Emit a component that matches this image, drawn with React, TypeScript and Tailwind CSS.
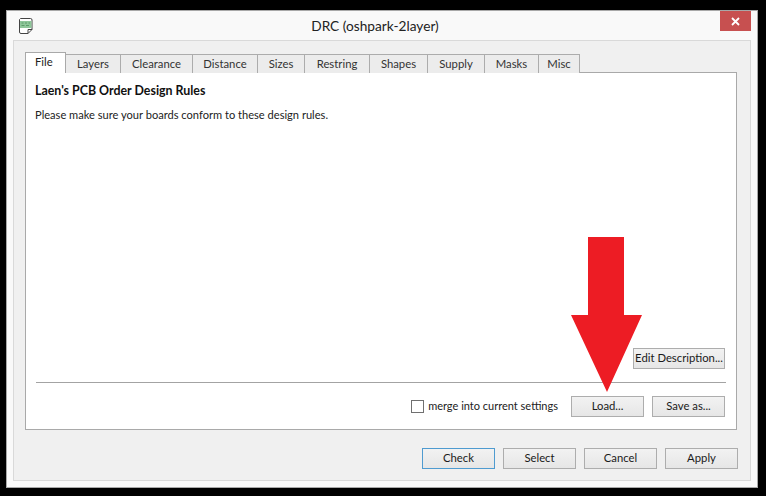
import React from 'react';

const tabs = [
  { label: 'Layers', width: 'w-[55px]' },
  { label: 'Clearance', width: 'w-[72px]' },
  { label: 'Distance', width: 'w-[65px]' },
  { label: 'Sizes', width: 'w-[47px]' },
  { label: 'Restring', width: 'w-[65px]' },
  { label: 'Shapes', width: 'w-[58px]' },
  { label: 'Supply', width: 'w-[57px]' },
  { label: 'Masks', width: 'w-[54px]' },
  { label: 'Misc', width: 'w-[41px]' },
];

const Button: React.FC<{ label: string; className?: string; focused?: boolean }> = ({
  label,
  className = 'w-[73px]',
  focused = false,
}) => (
  <button
    className={`h-[21px] border whitespace-nowrap text-[11.300px] text-[#1a1a1a] bg-gradient-to-b from-[#f2f2f2] to-[#e6e6e6] ${
      focused ? 'border-[#4f9bd0]' : 'border-[#adadad]'
    } ${className}`}
  >
    {label}
  </button>
);

const DocIcon = () => (
  <svg width="16" height="17" viewBox="0 0 16 17" className="block">
    <path d="M2.500 1.500h10a1.500 1.500 0 0 1 1.500 1.500v9.500l-4 4H3a1.500 1.500 0 0 1-1.500-1.500V2.500z" fill="#fff" stroke="#444" strokeWidth="1" />
    <path d="M10 16.500v-4h4" fill="none" stroke="#444" strokeWidth="1" />
    <rect x="2" y="4" width="11.500" height="7" fill="#8fc79a" />
    <path d="M3.500 6h2M7 6h2M10.500 6h1.500M3.500 8.500h3M8 8.500h3" stroke="#5d9a6a" strokeWidth="1" />
  </svg>
);

const RedArrow = () => (
  <svg width="71" height="156" viewBox="0 0 71 156" className="absolute left-[564px] top-[226px]">
    <path d="M17 0h36v78h18L36 155 0 78h17z" fill="#ed1c24" />
  </svg>
);

export default function App() {
  return (
    <div className="w-[766px] h-[496px] bg-black pt-[10px] pl-[6px] overflow-hidden font-['Lato','Liberation_Sans',sans-serif]">
      <div className="relative w-[752px] h-[478px] bg-[#f9f9f9] border border-[#a8a8a8] flex flex-col">
        <div className="h-[29px] flex items-start relative shrink-0">
          <div className="ml-[11px] mt-[6px]">
            <DocIcon />
          </div>
          <div className="absolute left-0 right-[14px] top-[4px] text-center text-[13.700px] leading-[22px] text-[#222]">
            DRC (oshpark-2layer)
          </div>
          <div className="ml-auto mr-[6px] w-[31px] h-[20px] bg-[#c75050] flex items-center justify-center">
            <svg width="9" height="9" viewBox="0 0 9 9">
              <path d="M1 1l7 7M8 1l-7 7" stroke="#fff" strokeWidth="1.800" />
            </svg>
          </div>
        </div>
        <div className="mx-[6px] h-[441px] bg-[#f0f0f0] border border-[#d9d9d9] pt-[11px] pl-[11px] flex flex-col">
          <div className="flex items-end h-[21px] relative z-10">
            <div className="w-[41px] h-[21px] bg-white border border-b-0 border-[#a9a9a9] text-[11.300px] leading-[18px] pl-[9px] text-[#222]">
              File
            </div>
            {tabs.map((tab) => (
              <div
                key={tab.label}
                className={`${tab.width} h-[19px] bg-[#ececec] border-t border-r border-[#acacac] text-[11.300px] leading-[18px] text-center text-[#333]`}
              >
                {tab.label}
              </div>
            ))}
          </div>
          <div className="w-[712px] h-[358px] bg-white border border-[#a9a9a9] -mt-px flex flex-col px-[9px]">
            <div className="mt-[9px] text-[12.400px] leading-[17px] font-bold text-[#111]">Laen's PCB Order Design Rules</div>
            <div className="mt-[8px] text-[11.100px] leading-[16px] text-[#222]">
              Please make sure your boards conform to these design rules.
            </div>
            <div className="mt-auto flex justify-end pr-[2px]">
              <Button label="Edit Description..." className="w-[92px]" />
            </div>
            <div className="mt-[13px] ml-px h-px bg-[#a3a3a3] w-[690px]" />
            <div className="mt-[13px] mb-[12px] flex items-center justify-end gap-[8px] pr-[2px]">
              <label className="flex items-center gap-[4px] mr-[5px] text-[11px] text-[#222]">
                <span className="w-[13px] h-[13px] border border-[#707070] bg-white" />
                merge into current settings
              </label>
              <Button label="Load..." />
              <Button label="Save as..." />
            </div>
          </div>
          <div className="mt-[18px] flex justify-end gap-[8px] pr-[12px]">
            <Button label="Check" focused />
            <Button label="Select" />
            <Button label="Cancel" />
            <Button label="Apply" />
          </div>
        </div>
        <RedArrow />
      </div>
    </div>
  );
}
